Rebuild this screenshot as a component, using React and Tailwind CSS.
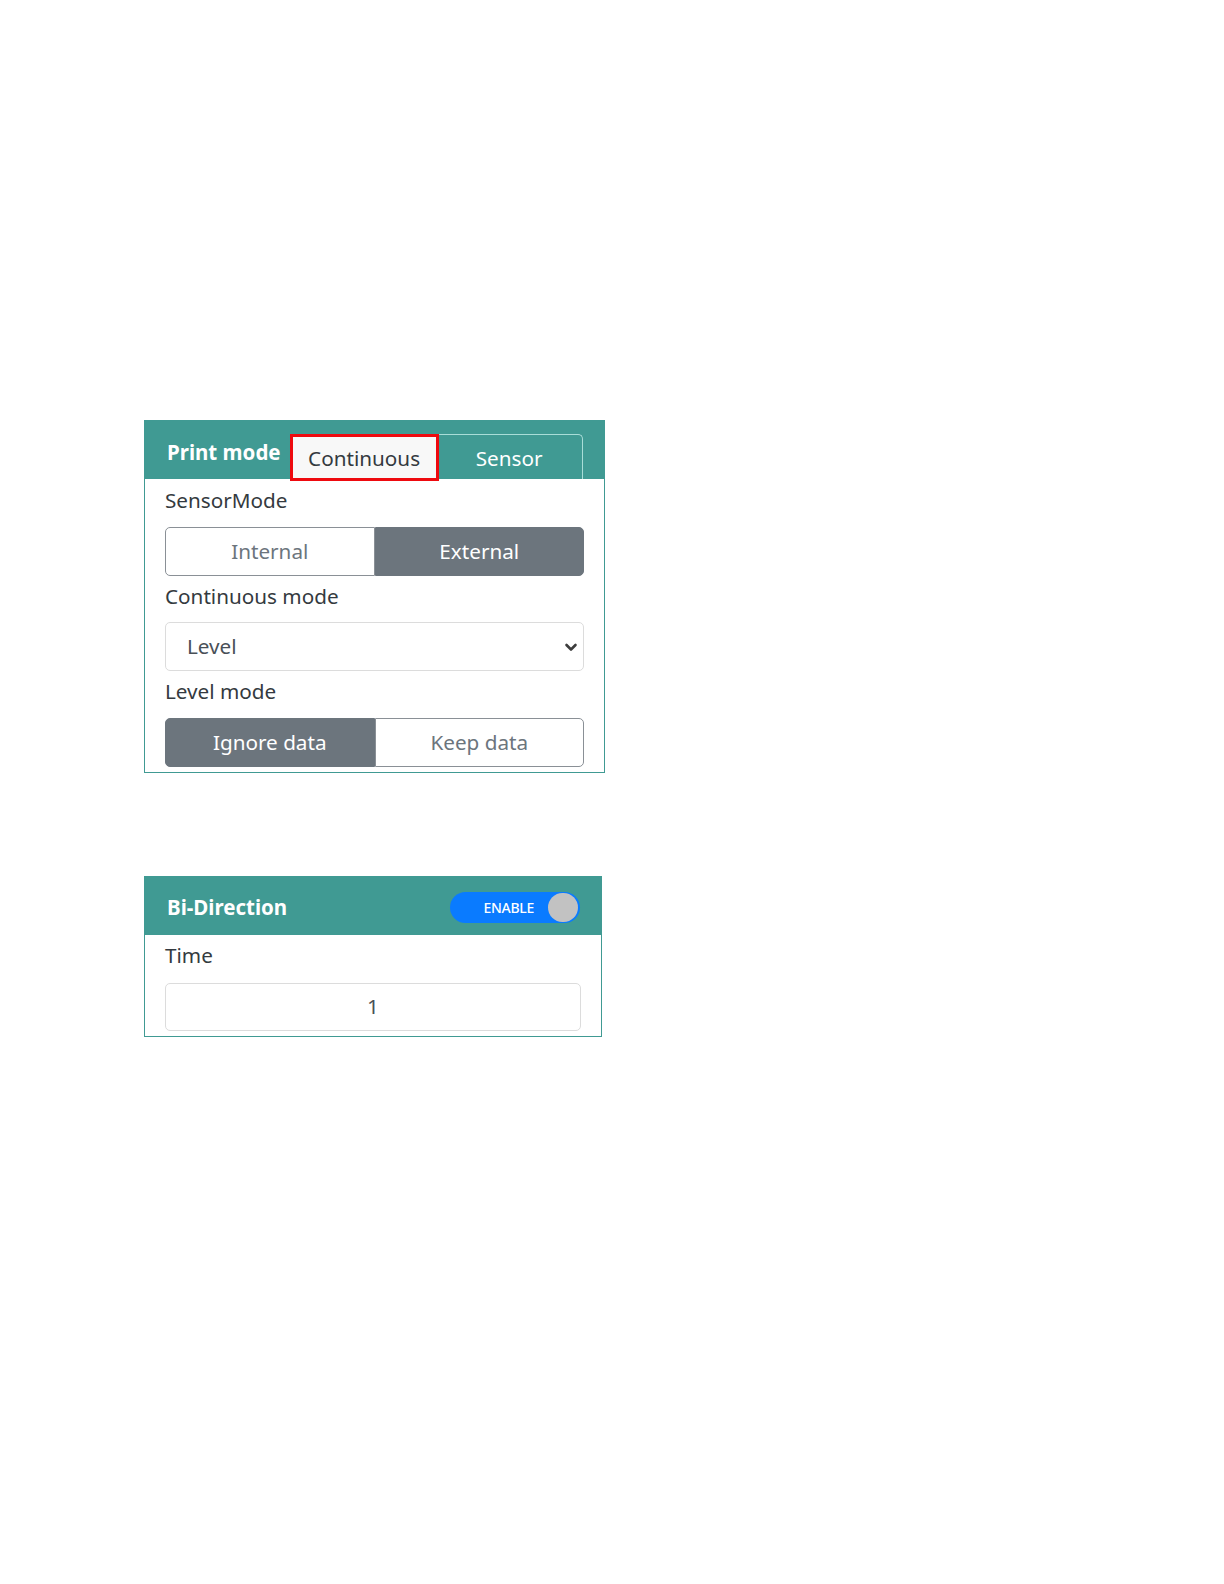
import React from "react";

const font = "font-['Noto_Sans',sans-serif]";

function Label({ children, className = "" }) {
  return (
    <p className={"h-[30px] leading-[30px] text-[20.7px] text-[#343a40] " + className}>
      {children}
    </p>
  );
}

function Segmented({ options, active }) {
  return (
    <div className="flex h-[49px]">
      {options.map((opt, i) => {
        const on = i === active;
        const first = i === 0;
        return (
          <div
            key={opt}
            className={
              "flex-1 flex items-center justify-center text-[20.7px] " +
              (first ? "rounded-l-[5px] " : "rounded-r-[5px] ") +
              (on
                ? "bg-[#6c757d] text-white border border-[#6c757d]"
                : "bg-white text-[#6c757d] border border-[#8a9096]")
            }
          >
            {opt}
          </div>
        );
      })}
    </div>
  );
}

export default function App() {
  return (
    <div className={"min-h-[1584px] bg-white pt-[420px] pl-[144px] " + font}>
      {/* Print mode panel */}
      <div className="w-[461px] border border-[#409a93]">
        <div className="h-[58px] bg-[#409a93] flex items-end pl-[22px]">
          <p className="mb-[12px] h-[30px] leading-[30px] text-[20.5px] font-bold text-white mr-[9px]">
            Print mode
          </p>
          <div className="flex items-end">
            <div className="relative z-10 -mb-[2px] w-[149px] h-[47px] pt-[3px] border-[3px] border-[#ee0a0f] bg-[#f8f8f8] flex items-center justify-center text-[20.7px] text-[#343a40]">
              Continuous
            </div>
            <div className="-ml-[2px] w-[146px] h-[45px] pt-[4px] border-t border-r border-[#a9ddd8] rounded-tr-[5px] flex items-center justify-center text-[20.7px] text-white">
              Sensor
            </div>
          </div>
        </div>
        <div className="px-[20px] pb-[5px]">
          <Label className="pt-[6px] h-[36px] mb-[12px]">SensorMode</Label>
          <Segmented options={["Internal", "External"]} active={1} />
          <Label className="pt-[5px] h-[35px] mb-[11px]">Continuous mode</Label>
          <div className="h-[49px] border border-[#dcdcdc] rounded-[5px] flex items-center justify-between pl-[21px] pr-[5px] text-[20.7px] text-[#495057]">
            <span>Level</span>
            <svg width="14" height="14" viewBox="0 0 14 14">
              <polyline
                points="2.5,5 7,9.5 11.5,5"
                fill="none"
                stroke="#3d3d3d"
                strokeWidth="2.6"
                strokeLinecap="round"
                strokeLinejoin="round"
              />
            </svg>
          </div>
          <Label className="pt-[5px] h-[35px] mb-[12px]">Level mode</Label>
          <Segmented options={["Ignore data", "Keep data"]} active={0} />
        </div>
      </div>

      {/* Bi-Direction panel */}
      <div className="mt-[103px] w-[458px] border border-[#409a93]">
        <div className="h-[58px] bg-[#409a93] flex items-center justify-between pl-[22px] pr-[21px]">
          <p className="text-[20.5px] font-bold text-white leading-[30px] mt-[2px]">Bi-Direction</p>
          <div className="w-[130px] h-[31px] rounded-full bg-[#0a7bff] flex items-center justify-end pr-[2px] mt-[3px]">
            <span className="text-[14px] font-medium text-white mr-[14px] tracking-[-0.3px]">ENABLE</span>
            <span className="w-[30px] h-[29px] rounded-full bg-[#c2c2c2]" />
          </div>
        </div>
        <div className="px-[20px] pb-[5px]">
          <Label className="pt-[5px] h-[35px] mb-[13px]">Time</Label>
          <div className="h-[48px] border border-[#dcdcdc] rounded-[5px] flex items-center justify-center text-[20.7px] text-[#495057]">
            1
          </div>
        </div>
      </div>
    </div>
  );
}
